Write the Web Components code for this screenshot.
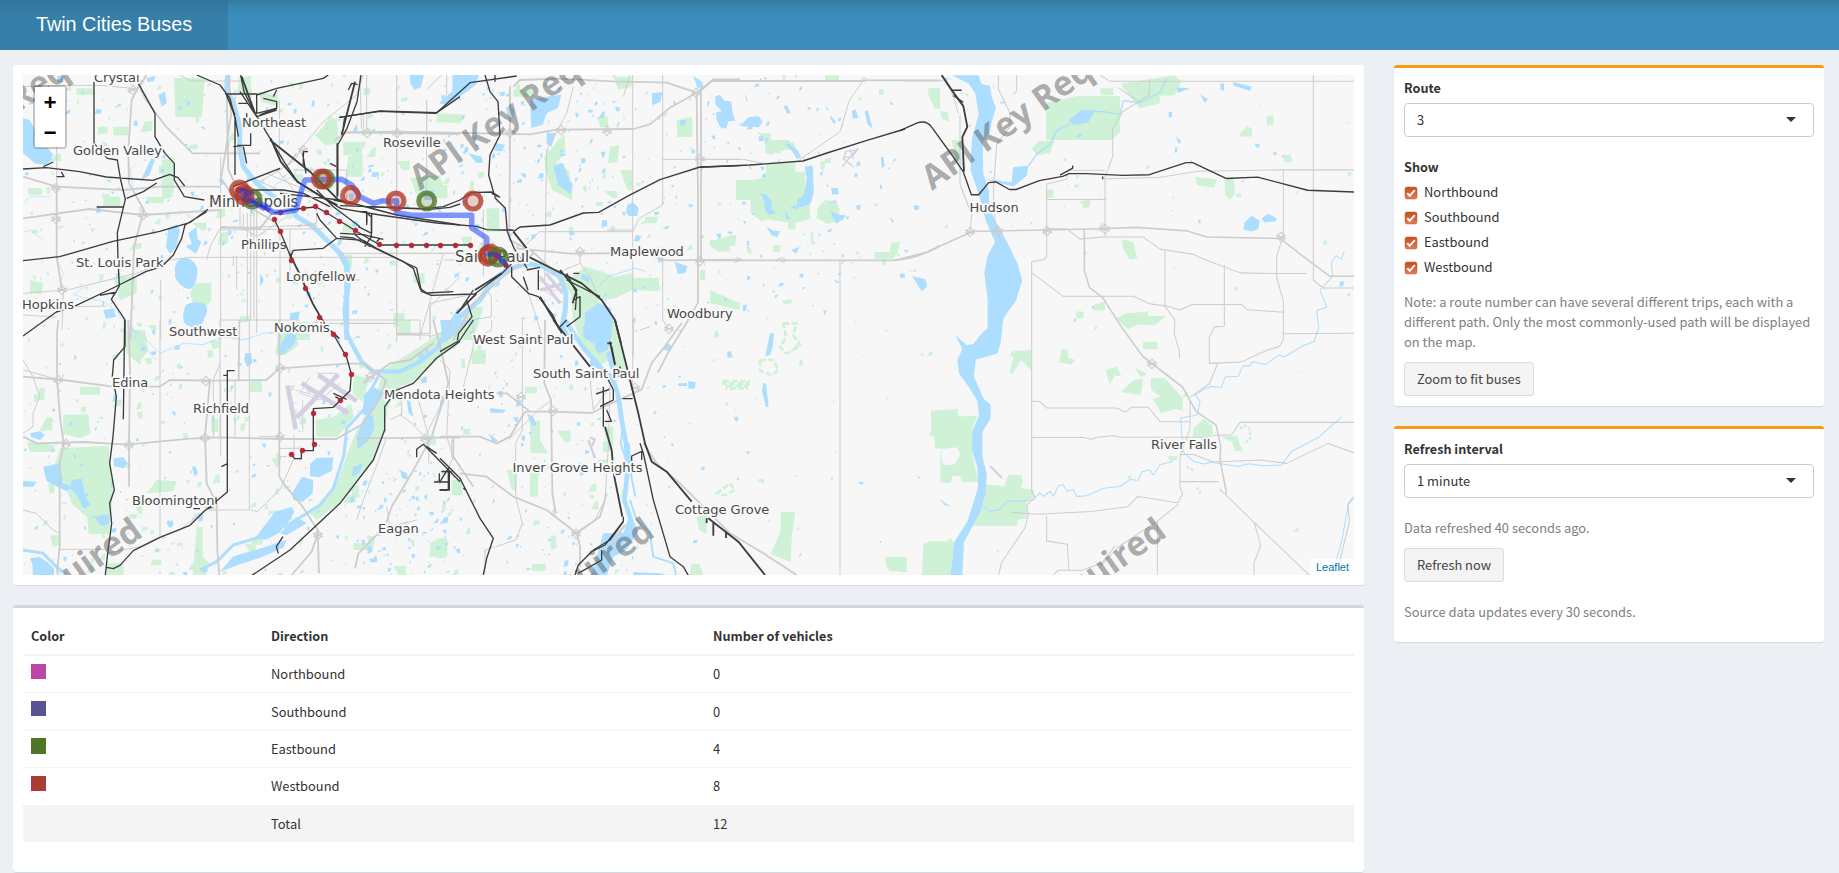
<!DOCTYPE html>
<html lang="en">
<head>
<meta charset="utf-8">
<title>Twin Cities Buses</title>
<style>
html,body{margin:0;height:100%;overflow:hidden}
body{background:#ecf0f5;color:#333;font:12.9px/20px "Noto Sans CJK SC","Noto Sans",sans-serif}
</style>
</head>
<body>
<bus-app></bus-app>
<script>
const define = (name, html, init) => {
  const t = document.createElement('template');
  t.innerHTML = html;
  customElements.define(name, class extends HTMLElement {
    constructor() {
      super();
      this.attachShadow({mode: 'open'}).append(t.content.cloneNode(true));
    }
    connectedCallback() { if (init) init(this, this.shadowRoot); }
  });
};

define('app-header', `
<style>
:host{display:flex;height:50px;background:linear-gradient(rgba(0,0,0,.14),rgba(0,0,0,.04) 8px,transparent 18px),#3c8dbc}
.logo{width:228px;background:linear-gradient(rgba(0,0,0,.08),transparent 16px),#367fa9;color:#fff;font:19.8px/48px "Liberation Sans",Arial,sans-serif;text-align:center;height:50px}
</style>
<div class="logo"><slot></slot></div>`);

define('app-box', `
<style>
:host{display:block;background:#fff;border-radius:3px;box-shadow:0 1px 1px rgba(0,0,0,.1);padding:10px;box-sizing:border-box}
:host([kind]){border-top:3px solid #d2d6de}
:host([kind=warning]){border-top-color:#f39c12}
</style><slot></slot>`);

define('form-select', `
<style>
:host{display:block;margin-bottom:20px}
b{display:block;margin-bottom:5px;font-size:12.65px}
.field{display:flex;align-items:center;justify-content:space-between;height:34px;box-sizing:border-box;border:1px solid #ccc;border-radius:4px;padding:0 17px 0 12px}
i{border:5px solid transparent;border-top-color:#333;border-bottom:0;margin-bottom:2px}
</style><b></b><div class="field"><slot></slot><i></i></div>`,
(el, r) => { r.querySelector('b').textContent = el.getAttribute('label'); });

define('check-option', `
<style>
:host{display:flex;align-items:center;height:20px;margin-bottom:5px;gap:7px}
svg{width:12px;height:12px;margin-left:1px;margin-top:1px;overflow:visible}
</style>
<svg viewBox="0 0 12 12"><defs><linearGradient id="g" x2="0" y2="1"><stop stop-color="#c64d1e"/><stop offset="1" stop-color="#e27d55"/></linearGradient></defs><rect x="0" y="0" width="12" height="12" rx="2" fill="url(#g)" stroke="#b85c38" stroke-opacity=".5"/><path d="M2.3 6.2 4.7 8.8 9.8 3.2" fill="none" stroke="#fff" stroke-width="1.9"/></svg>
<slot></slot>`);

define('muted-text', `<style>:host{display:block;color:#808080;margin-bottom:10px}</style><slot></slot>`);

define('push-button', `
<style>
:host{display:block}
button{font:inherit;color:#444;background:#f4f4f4;border:1px solid #ddd;border-radius:3px;height:34px;padding:0 12px;display:block;white-space:nowrap}
</style><button><slot></slot></button>`);

define('vehicle-table', `
<style>
:host{display:block}
.row{display:grid;grid-template-columns:240px 442px 1fr;padding:0 8px;box-sizing:border-box;height:37.4px;line-height:20px;align-items:center;border-top:1px solid #f4f4f4}
.head{height:38px;border-top:0;border-bottom:2px solid #f4f4f4;font-weight:bold;font-size:12.65px}
.head + .row{border-top:0;height:36.4px}
.total{background:#f4f4f4}
i{display:block;width:15.4px;height:15.4px;align-self:start;margin-top:7.7px}
</style>
<div class="row head"><span>Color</span><span>Direction</span><span>Number of vehicles</span></div>
<div class="row"><i style="background:#bb46a8"></i><span>Northbound</span><span>0</span></div>
<div class="row"><i style="background:#5a5391"></i><span>Southbound</span><span>0</span></div>
<div class="row"><i style="background:#507525"></i><span>Eastbound</span><span>4</span></div>
<div class="row"><i style="background:#a93d34"></i><span>Westbound</span><span>8</span></div>
<div class="row total"><span></span><span>Total</span><span>12</span></div>`);

define('zoom-control', `
<style>
:host{display:block;position:absolute;left:10px;top:10px;border:2px solid rgba(0,0,0,.2);background-clip:padding-box;border-radius:4px}
div{width:30px;height:30px;background:#fff;color:#000;font:bold 22px/36px "Liberation Mono",monospace;text-align:center;overflow:hidden}
div:first-child{border-bottom:1px solid #ccc;border-radius:2px 2px 0 0}
div:last-child{border-radius:0 0 2px 2px}
</style><div>+</div><div>−</div>`);

/* The city map is drafted on six sheets, each at three units to the pixel. */
define('bus-map', `
<style>
:host{display:block;position:relative;height:500px;overflow:hidden;background:#f7f7f7}
svg{display:block;width:1331px;height:500px}
.w{fill:#addeff}.p{fill:#cff1d6}
.wl{fill:none;stroke:#addeff;stroke-linejoin:round;stroke-width:4}
.r{fill:none;stroke:#cdcdcd;stroke-width:3;stroke-linejoin:round}
.R{fill:none;stroke:#cdcdcd;stroke-width:5.4;stroke-linejoin:round}
.k{fill:none;stroke:#3c3c3c;stroke-width:4;stroke-linejoin:round}
.K{fill:none;stroke:#3c3c3c;stroke-width:5.5;stroke-linejoin:round}
.a{fill:none;stroke:#d4d0e2}
.mark text{font:bold 34px "Open Sans",sans-serif;fill:#4c4c4c;fill-opacity:.46}
.names text{font:13px "DejaVu Sans",sans-serif;fill:#484848;stroke:#f9f9f9;stroke-width:3.4px;stroke-linejoin:round;paint-order:stroke}
.names .big{font-size:15px}
.leaf{position:absolute;right:0;bottom:0;background:rgba(255,255,255,.7);color:#0078a8;font:11px/16px "Liberation Sans",Arial,sans-serif;padding:0 5px}
</style>
<svg viewBox="23 75 1331 500">
<g id="parks"></g>
<g class="p">
 <g transform="scale(.33333)">
  <path d="M522 234h92l-8 118-80-2zM485 480l38-10v90l-6 30-30 10zM590 850h44v50l-10 16h-44l-10-40zM775 275l60 10v36l-50-16zM990 350l22 10 4 70-40 6-32-30 20-20zM1045 470l42-10v70h-50zM340 830h70v50l-50 20zM340 380h46v26h-46zM880 965h50v55h-80zM310 590h50v30h-50zM85 565h40v20H85zM90 840l40 10-5 34-35-10zM230 265h54v20h-54zM440 590h50v20h-50zM1230 535l90-10 10 40-80 14zM1240 820h34v30h-34zM1180 940h34v40h-34z"/>
 </g>
 <g transform="translate(0 320) scale(.33333)">
  <path d="M1150 150 1290 60 1380 0v70l-70 50-80 70-60 20-14 110-36 100-90 120-80 60-20-20 80-90 40-110 20-50 50-80zM180 385l145-8 15 130-12 135h-62l-4-50-46-40-26-70-28-40zM190 285l75-3 6 60-30 12-52-12zM946 300l56-10 50-40 10 40-50 60h-62zM375 30h60l10 60-30 40-36-30zM470 480l60 4-10 30-80 6zM590 620h18v90l20 20-10 34h-40zM1062 165l46 10-20 70-30-24zM836 30l50 5 10 40-40 30h-30zM320 730h50v35h-50zM750 180h36v36h-36zM240 200h60v24h-60zM1310 655h26v60h-26zM1292 666l50-8v52h-54zM1060 670h60v20h-60zM80 365l80 10 10 20-80 0z"/>
 </g>
 <g transform="translate(340 60) scale(.33333)">
  <path d="M230 375h92v40h-92zM613 290l60-70 4 60-30 30 40 20 10 90-60-30-22-60zM735 620l50 14 40 16 50-10 6 14h76v40l-80-4-50 24-40 6-60-10-30-60zM1010 180l46-10 2 60-46 2zM840 330h36v60h-14zM290 160l90 4-20 26-70-4zM440 445h38v70h-38zM640 635l60 20 70 60 50 60 20 66H720l-20-60-8-80zM180 780h32v44h-38zM380 740h50l-30 100h-60zM810 260l28-4-6 50-28 4zM1110 690l90 40v20l-90-20zM820 50h56v30l-40 10zM10 245h70l-20 40H10zM520 90h60v20h-60zM915 470h40l-6 20h-34zM1080 630h16v30h-16z"/>
 </g>
 <g transform="translate(440 320) scale(.33333)">
  <path d="M420 0h105l35 160-30 10-20-50-40 20-50-70zM95 90h42v42H95zM270 310l30-10v60l25 40h-54zM270 460h24v70h-24zM1022 576h44l-10 70-4 80-60-24 30-70zM1335 710h45v44h-30l-12-16zM770 590l30-5v56l-22-10zM755 732h24l10 33h-40zM490 320h30v60l-20-10zM275 732h42v20h-40zM35 480h32v45H35zM255 200h36v20h-36zM200 450h30v60h-14zM950 480l20-6 4 18z"/>
  <path d="M960 120h40l15 30-20 16-35-14zM1030 10h40l-10 35 20 30-40 26-20-20 18-30zM850 183h76v8h-76zM860 198h60v7h-60zM830 520l40-30 14 20-30 16z" fill="none" stroke="#cff1d6" stroke-width="8" stroke-dasharray="18 7"/>
 </g>
 <g transform="translate(700 70) scale(.33333)">
  <path d="M178 190h34v20h50l20 10 18 44-30-26-28 4v8h-22l-4 4-20-6v-18h2zM108 330h46l44-8v-36l10-6h78v26h30l-2 60 16 24v56l-30 10h-14v22h-22v-20l-60-10-20 6-32-24v-40h-44zM352 415l22-24 36 2 8 26v36l-36 6-32-16zM30 510h14l50-14h14l-2 30-16 4v14l-34 2-26-18zM523 546h46l4-28 28-2-8 30-14 20h-56zM375 15h42v15h-42zM684 54h36v64l-14-4-20-36zM362 273h12v26h-12zM219 525h22v20h-22zM332 485l8 2v28l14 6-20 2zM537 56h13v18h-13zM248 15h8v14h-8z"/>
 </g>
 <g transform="translate(900 60) scale(.33333 .34447)">
  <path d="M438 125l90-20h132v105l-25 22H438zM395 258l20-22 50-2-15 36-38 8zM602 82h38v20h-38zM664 68l160-24 20 20-20 38-45 2v22l-60 14-50-60zM85 82l34 2v34l-14 26-16-34zM120 146l26 8v26l-20-10zM154 232h22l14 80-20-14zM885 340l66 6-10 24-50-6zM974 350l28-10 2 50-14 16-14-12zM1022 212l20-20 14 8v22h-36zM1150 276h22l6 20h-26zM540 410l30-4v20l-18 6zM440 376h20v24h-20zM666 520l34 10 12 46-24 4-20-34zM93 1018l80-5v22l58-2-16 50v52l20 90-50 0-4-16-24-2-4 20h-32V1128h-16l-3-36h-14l6-24zM260 1232l140 15 4 20-24 14v50l-28 4v17H220l32-70zM324 1204h40l4 20-8 26h-50zM70 1405l20-8h72l-10 98H66zM0 1442h20v44H0zM730 818l40 0 4 22h-46zM580 712l35-12v26l-34 2zM528 730h22v20h-22zM752 924l44 0 52 58v36l-20-5-44 12-26-40 22-8-26-20zM880 1070l30-28 28 20v32h-60zM960 1094l50-4 18 46h-22l-10-26zM650 750l26-14 70-6-4 12 56 2-34 26-50-2-30 14zM345 845l48-4v60l-30-30-25 40-10-4zM485 840h18l2 26 20 4-10 14-38-6zM616 900l34-10 14 28-20-2-14 26zM704 892l38 20-20 8zM805 1150h26v12h-24zM700 930l30-4-8 46-60-8z"/>
  <path d="M1020 1070q24-20 30 10t-20 30M860 1180l20 10M890 1240l14 20" fill="none" stroke="#cff1d6" stroke-width="8" stroke-dasharray="9 5"/>
  <path d="M120 1130l50-6 12 20-18 30-34 2z" fill="#f7f7f7"/>
 </g>
</g>
<g id="ponds"></g>
<g class="w">
 <g transform="scale(.33333)">
  <path d="M69 355l20 5 14 25v58l40 0 16 20-6 20-18 12-30-5-36-30zM525 800q5-25 35-27 35 12 32 47-2 40-22 48-35-8-45-38zM557 915q23-15 58-3 15 18-5 48-20 25-50 15-20-15-3-60zM505 685l25-12 10 17-10 50-20 22-12-22zM565 700l25-20 2 36 12 10-16 36-32-24 20-6zM475 285l20-10 5 35-15 10zM430 525l24-50 12 2-18 48-28 20zM1228 225h40l-8 35-15 10zM870 940l30-6-5 26-25 0zM310 930l30-4 8 24-30 6zM780 820l12 20-12 20zM100 400l40-2 10 30-30 10zM440 235l26-8-4 16-20 4zM560 870l20-6"/>
  <path class="wl" style="stroke-width:15" d="M683 225l-3 45 20 40 20 70-2 60 12 60 40 50 50 40 50 30 20 30 50 30 40 40 40 40 22 30 3 60-10 80 5 70"/>
  <path class="wl" style="stroke-width:2" d="M240 850l10 14-30 20 40 10 50 10 40 30 20 30 60 60M170 780l20 40-10 30M370 600l30-40-10-50 20-20M150 590l-60 0-20 20M900 490l-20 40-50 20-20 30M60 700l30-10 40 30"/>
 </g>
 <g transform="translate(0 320) scale(.33333)">
  <path d="M835 85l30-50 24 10-4 24-34 34-16 4zM735 100l18 0 4 30-16 10-8-20zM550 0h62l-10 18-30 4zM930 432l20-18 50-2-4 40-40 20-26-4zM876 520l30-50 34 10-2 40-30 26-28-6zM765 655l60-80 50-14 8 14-20 34-26 30-40 20zM660 755l40-46 70-20 90-30-10 24-70 30-60 20zM1092 225l24-26 36 20-24 40-20 30-20-6zM1070 350l24-60 24-6 6 40-20 40-30 24zM1060 440l30-10-14 30-20 10zM130 440l50-10 10 60 30 10-20 14-60-30zM215 480l30-4 10 50 16 30-20 10-20-40-20-20zM340 415l30-4 14 20-12 14-30-6zM90 715l30-4 20 14 22 20 0 20H98l0-30zM283 590l44-8v30l-24 6zM90 340l30-6 14 12-14 14-26-8zM70 482l40 4-10 14-34 0zM576 440l10-2 8 20-10 12zM1220 240l10 0 10 50-14-10zM1200 450l20 10 6 20-20-6zM890 590l30 20-60 36-20-6zM1014 395l20 20"/>
  <path class="wl" style="stroke-width:13" d="M1040 0v40l20 40 25 45 35 30 80 0 60-30 50-40 40-70 30-50"/>
  <path class="wl" style="stroke-width:9" d="M1140 160l-30 55-15 50-55 60-8 80-32 100-40 50-80 50-80 40-100 30-50 50-50 25M69 690l60 10 40 40 30 25"/>
  <path class="wl" style="stroke-width:2.5" d="M380 20l40 20 40 40 20 20 70-30 60 4 60-24 60 10 60-20 50-4M390 0l20 60 60 60"/>
 </g>
 <g transform="translate(340 60) scale(.33333)">
  <path d="M337 45h80l-10 30-40 30-50 30-20-6 40-36zM210 45h36l-6 30-16 14-14-20zM570 120l50-10 44-6-10 40-34 16-12 34-34 10zM620 218l28 2-14 40-14-8zM640 318l30-8 16 50 12 10-4 34-40-30zM935 100l32-4-6 30-24 10zM1060 48l30 20-16 20zM470 250l26 4-10 20-24-2zM385 280l40 10 4 18-20 0zM1003 605l40 14-8 20-20 4zM862 435l16-8 18 16-4 24-26 2-8-14zM888 525l16 4-8 16-14-2zM734 760l40-30 40 14-10 96h-68zM725 640l26 14-6 14-20-12zM248 390h34v30h-28zM1020 180l18 0-2 16-16 2zM498 140l26 6-6 30-16-8z"/>
  <path class="wl" style="stroke-width:15" d="M0 580l20 40v220M310 830l50-60 60-50 40-60 40-30 60-20 50 10 50 30 18 50-2 50-10 50 30 50"/>
  <path class="wl" style="stroke-width:2.5" d="M775 680l30-30 80-26 30 10"/>
 </g>
 <g transform="translate(440 320) scale(.33333)">
  <path d="M430 20l40-40 50 14-6 54-10 40-30 14-10-30-34-20zM680 66l14 12-4 16-20-6zM862 96l10-4 6 20-16 2zM745 184l22 2-2 20-20 0zM715 190l26 0v8h-26zM990 40h12l-4 40-8 26-14 2zM970 190l8 0 8 70-8 2-12-50zM150 265l46 4-4 9h-40zM260 280l20 10 10 26-14 2zM145 340l30 22-16 6zM917 394h12l-4 10zM490 640l60 0 20-60 20 60-30 50-40 20-20 56h-46zM0 0h20l0 0 70 0-40 40-40 30zM0 220l14 20-14 40zM450 120l36 20-10 6-26-8zM580 756l80 4 20 5H580zM245 345l10 4v14l-10-2zM498 100l14-10 10 50-10 10z"/>
  <path class="wl" style="stroke-width:14" d="M375 0l25 40 35 50 45 50 35 30 18 50 10 70 15 80 5 70-5 60-5 40 20 60 15 40"/>
  <path class="wl" style="stroke-width:6" d="M540 230l10 80-8 60 20 60M570 540l20 60 40 40 10 70 60 20 8 35M566 370l8 100 12 60"/>
 </g>
 <g transform="translate(700 70) scale(.33333)">
  <path d="M45 80l14-6 14 18 20 2 4 30 8 28-20 2-6 22-18-4-12-24 0-22 16-2-18-20zM120 168l26-26 30-4 12 18-12 16zM250 108l12-2 10 22-10 4zM455 124l12-6 8 26-16 2zM494 124l10-2 14 54-16-14zM252 220l16 2 26 20 10 20-14 4-12-20zM314 290l24-4 4 80-10 34-24 12-18-2 2-20 20-16 8-50zM178 370l22 4 16 20-2 20 14 16-24 4-10-20-2-24zM394 354h20l2 18-20 2zM392 424l24 10 22 2-10 14-18 4-10-6zM200 470l20 12 20 2-8 18-20-10zM542 262h8l4 26-8 6zM0 40l10 6-2 12H0zM464 310l10 2-4 10-8-2zM644 404l14 4-4 12-12-4zM134 70l8 16-2 10zM376 106l12 14-6 0zM392 136l16 20-6 6-10-14zM80 484l20 2-10 8zM274 540l24-10-10 22zM568 440l14 12-6 6zM610 538l18 4-10 6zM540 344h6v14l-6-2zM358 310l12-6-4 16zM568 94l16 10-12 0zM254 424l16 20-10 6zM180 290l14 2-6 10zM380 482l18-8-8 14z"/>
 </g>
 <g transform="translate(900 60) scale(.33333 .34447)">
  <path d="M155 44h80l10 26 25 5 5 30 13 35-13 40-5 30-22 30 2 90 17 50v40l15 40 40 70 30 60 15 50-20 60-37 50-8 70-10 32-65 18-5 50 30 65 20 15v40l-25 40v70l13 50-3 60-15 50-50 90-5 95h-35l10-95 40-60 20-60 12-40-2-60-18-50 3-50 20-50-5-40-25-40-30-40-5-40 15-30-20-40 34 28 20-4 20-26 22-20v-80l-10-80 10-50 22-40-27-60-22-80-25-70 5-90 20-70-10-60-20-30zM255 345l80 10 4-44 46-4-4 28-40 32-60-14zM505 175l40-30 40 0-20 36-44 8zM1035 470l20-18 24 14-4 24-20 8-26-6zM1085 460l18-14 28 14-4 8-34 4zM1000 64l56 14-6 12-50-16zM900 100l24 14-10 10zM830 80l40 2-36 14zM36 628l40 8 6 20-16 16zM828 222l16 14-8 8zM806 150h10v16h-10zM116 1272l20 14 18 10-20-4zM40 424l20 8-14 4zM0 620h14v12H0zM50 1206l12 6-6 4zM960 68h12v22l-10-4zM1120 268h10v8h-10z"/>
  <path class="wl" style="stroke-width:4" d="M385 308l25-35 40-28 20-40 40-20M570 150l40 0 50 8 10-40 50 6 60-30 20-40"/>
  <path class="wl" style="stroke-width:3" d="M230 1285l40 25 30-5 20-25 60 0 20-5 20-18 10 10 20-15 10 15 15-30 15-5 10 20 20-5 10 20 30-2 50-22 50-5 30-20 25 2 10-25 25-5 10 15 20-30 40-10M840 1130l40 35 30 8 25-5 80 12 30-8 40 6 60-2 30-40 80-40 70-60M850 1140l-8-100 50-10 8-40-15-18 35-20 15-4 30 2 10-30 40-2 14-30 20 0 8-12 40 8 40-28 15 6 60-34 30-10 14-40-6-50 30-10-20-50 38-40-4-40 14-20 15 10 10-22M1360 1268l-15 20-20 110-30 95"/>
 </g>
</g>
<g class="r">
 <g transform="scale(.33333)">
  <path class="R" d="M425 240l-30 60-10 150 2 100 45 80-30 110-5 130-6 150M687 225l6 120-15 100-15 90 40 60 120 70M69 530l100 30 200 10 110-10 180 0M69 655l200-28 160 18 230-15M170 560l0 210 16 100M680 280l5 230 20 40 120 90M1005 420l30-22 65 0 280 4M890 460l-30 40M440 225l-22 35 20 40 60 80 80 80 200 0M820 635l-40 50-120-4"/>
  <path d="M69 260l110-4 120 0 110 10M170 260v400M200 870l210-50 100-40 60-8 620 0M69 930l160-10 90-2M69 945l100 6M190 870l-4 120M662 470v550M705 270l0 160M770 600v400M838 300v180M870 690v150M482 840v180M1190 270v730M620 780l10-40 30-55 290-10M742 640v320M752 630v330M762 625v330M730 640v50M720 620v60l50 30 90-60M660 960l240 0M950 960v40M960 970l230 0M1090 225l-20 60-100 80-50 60-40 60-100 60M1280 300l0 110M1100 225l0 175M540 225l30 18 160 0M660 690l310-4M710 768v100M700 768v30M69 880l130-10M750 560l90 60M730 570l90 60M770 540l130 60M800 520l140 60M830 510l60 70M1190 420v360M1190 780v20M840 700v90l0 230M810 1000l150-35M890 680l60-10 0-60M1190 1002l100 4M1290 1000v-80l30-30 60-60M1140 760h240M880 510h160l0 100M1340 225v60M1280 270l60-60"/>
 </g>
 <g transform="translate(0 320) scale(.33333)">
  <path class="R" d="M69 170l120 10 150 20 140 0 30-20 130 2 160-2 40-35 200-14 50 0 70 50-30 70-40 60-80 46H840L660 352l-90 4-190 18-130-8-140 4-40-20M385 0l5 150-3 220 0 130M175 0l-4 40 0 140 10 120 10 70-12 60 0 250-8 80M630 180l-15 170 5 140 30 60 2 140 6 75M718 0l-2 180M838 0v470l20 30 50 60 45 70 4 130M1070 355l210-2 100 0M1300 0l30 120 15 70-50 160-60 110-60 100-20 60-80 80-10 45M955 635l-20 60-60 70M1090 190l80-60 60-10 70-50"/>
  <path d="M660 0v130l-20 50v170M705 180v170M748 0v570h-120M480 0v650l-60 30-100 20M480 650l60-20 50-40M660 130v220M752 570l20 5 70-70 40-90 0-70M840 385h60M69 120l30 50 20 60-20 50 0 40-30 20M69 570l40 10 50 50 20 10M180 688h140M70 150l110 30M662 180l0 230M780 350h60M840 410h20M1170 300l30-15 30 20 50 50M1205 220v66M1250 220l36 130v80M1350 0v30l-60 20M1070 600l20-60 50-130 20-60M1160 560l10 60 80-20M1355 360v50l25 25M1280 340l30-60 30-60M960 0h230v40h100"/>
 </g>
 <g transform="translate(340 60) scale(.33333)">
  <path class="R" d="M0 217l170-2 400 8 80-14 230-2 50-14 60-50 80-45 50-40h80M510 220l-2 320M520 80l20-20 120-4 160 8 160 4 90 30 2 190 2 100 0 300 0 40-40 70-50 80-30 60M340 840l60-110 90-80 90-70M530 565l160 16 210-2 80 22 220-2M508 540l70 35 70 65M510 80v140"/>
  <path d="M170 45v800M260 120v300M250 45l-10 40M60 45l4 160M70 220v-60M510 80l-2 200M700 80l-20 80-60 110-6 400M850 110l20-65M878 45v470h-280l-40 40M878 515l20-40 70-40V45M968 298h232M0 580h500M800 510h78v500M170 825h70M0 790h140M720 580v30l-70 30M720 610l30 40 20 50M430 450v200M550 650l60 190M270 840v-110l140-30M440 690l14 20v60l-60 10M968 600v180l20 30M0 660h60M310 600h100M170 780h70v60M310 580l-70 250M400 770l-80 70"/>
 </g>
 <g transform="translate(440 320) scale(.33333)">
  <path class="R" d="M315 0l-2 190 20 50 4 280 10 60M40 350l80 0 50 20 40-20 45-75 80 0 120 4 60-30 90-40 30-80 40-50 50-70M60 460l80 10 80 60 100 40 90 70 10 40v60M170 220h30l70 55M0 350h40l0 60 60 90M610 370l40 60 70 60 90 90 60 60 100 60 100 65M410 640l70-50 20-70"/>
  <path d="M247 0v330l-20 40v160l20 80-20 50-60 20M580 0v110M1200 0v765M0 120l30 30-10 200 20 60-20 50M100 0v80l-30 120M155 0v30l-60 30M600 30l30-10M460 270l50-70-5 180-10 160-30 60-60 40M165 680l-30 10v70M450 180l10 90M330 580l80 60M335 240l-40 30-90 90"/>
 </g>
 <g transform="translate(700 70) scale(.33333)">
  <path class="R" d="M0 64l35-31h445l12-2 228 0M0 571h110l310 0h160q70-4 140-43M3 60v510"/>
  <path d="M0 268h130l70 14M490 31l-42 60-28 94-28 20-92 63M420 571v180M110 562l16 8-24 8M235 566l12-3 12 8-12 6zM484 28l8-6 10 8-10 5z"/>
 </g>
 <g transform="translate(900 60) scale(.33333 .34447)">
  <path class="R" d="M0 578l80-20 90-40 50-20 180-4 200-4 110-4 150 10 60 18 220 4 80 60 70 50H1362M553 490l0 120 15 50 40 30 60 90 60 80 120 90 40 70 60 40 14 60-2 40 20 100" style="stroke-width:4.6"/>
  <path d="M958 1244l104 98 165 153M0 60h130M180 160l0 200 35 90-5 50M125 44l30 50 20 60M295 44l0 40 35 70 0 40-40 50-10 140 5 90 20 60M340 100l10-10V44M600 44l30 18H1362M1240 44V640l30 22h92M615 510V340l23-60V200l30-50 50-30 30-20V62M655 80l60 40M615 345l160-4 120-18 250-4h217M438 405h180M440 570V360l60-14 5-26h110M440 490v80l-10 10-35 6v665l10 20-25 22 5 25-10 40-70 100-10 40-30 35M395 618l95 68h210l50 22 50 6 40 12 35-16h150l15 15 110 7M795 550v165l30 40-2 40 15 50v20M973 595v178l-30 2-15 30v75h25l70-3 80-35 35-10 12-20V700l-20-70v-60l20-60V320M440 490l60 0 40 30 70-6 120 0 50 35 100 15 30 14 110 40 120 2h80M1150 795l212-2M868 980l60-40 25-58M395 990l25 2 20 18h210l25 12 20-14h50l35 42h90M395 1096h155l25 5 15-6 50-4 25 4h265M940 1090l55-2 25-36h342M870 990v80l-30 80v90l8 20-15 25-120-18-30 30-110 14-160 8-80-6M840 1145h40l60 22 140-6 80 10 125-58 78 28M840 1224h115M440 1324v72l62 10 5 75M835 1290l-65 50-110 70-60 60M772 1340v155M1062 1340l20 70-20 50v35M1362 1270l-18 20 4 50-30 120v35M460 1495l15-14h70l60-20 40-50"/>
 </g>
</g>
<g class="r" id="knots"></g>
<g class="a">
 <g transform="translate(0 320) scale(.33333)"><path stroke-width="14" d="M863 198l24 130M905 190l140 90M955 165l115 78M1015 163l-125 130"/><path stroke-width="3" d="M855 198h30M908 240v98M950 160h60M880 300l30-20M930 170l-30 50 60 20 60-50M886 210l70 20"/></g>
 <g transform="translate(340 60) scale(.33333)"><path stroke-width="9" d="M600 650l60 80M618 640l50 60M600 690l70-20"/><path stroke-width="3" d="M595 660l70 30-55 0 60 40"/></g>
 <g transform="translate(440 320) scale(.33333)"><path stroke-width="7" d="M445 360l20 54M450 352l14 6-8 20M555 615l-40 50"/></g>
 <g transform="translate(700 70) scale(.33333)"><path stroke-width="4" d="M426 290l48-56M428 264l34 28M438 244l-6 18 24-2 16-20zM450 238l10 30"/></g>
 <path stroke-width="2" d="M990 466l12 12"/>
</g>
<g class="k">
 <g transform="scale(.33333)">
  <path d="M282 245v185l40 45 30 5 10 60 14 58-24 100 2 80 4 80-24 40 40 60-4 300M415 250l50 90v70l30 50 28 30v50l30 50 60 10M69 507l70-4 100 12 80 16 140 10 50-18 25 10 20 25M69 782l110-12 160-46 140-30 90-26 55-40M490 795l30-30 25-50 10-40 65-40M380 595l50-20 40-26M290 621h80M69 1008l100-72 60-20 110-52 100-50 50-15M300 886l50-10M130 500l30-14M170 530h22l-8-14M590 225l70 30 30 40 15 60v170M675 282h95M722 225l10 50 30 60 30 50 60 100 40 60 130 80M700 560l140-55M720 275l50 75 60-20M770 280v60l60-15v-20l-40-10M820 290l10-20M770 285l60-20M830 265l140-30 15-10M1083 225l-12 80-30 80-28 50v150M1017 352l120-18 170 6 73-50M1045 270l10-20 18 4M1030 380l4-28M740 340v20M752 400v36h-40M730 440l10 50M700 440l30-4M705 350l10 60M910 495v-40h14M918 520l-10-60M990 490l20 10M950 570l50 50 80 60M720 570h130l60 10 80 40M840 580l180 20 170 45 190 30M1000 600l100 20 190 8 60-6 30-10M950 640l10 20 50 55 80 6 40 24 80 40 30 20 20 60 20 14 80-4M1010 715l-40 30-90 6-10 24M1100 640l14 10v60l-20 30M1100 645v30M1020 700l70 4 60 14M1060 700l50 40M715 310h26"/>
  <path class="K" d="M725 230l40 110M812 415l30 70 50 60 80 50 40 20M680 285l24 60M1012 430v160M810 420l120 95 90 90M868 760l30 60 40 90 40 70 40 36M780 345l50-20"/>
 </g>
 <g transform="translate(0 320) scale(.33333)">
  <path d="M375 0v80l-34 40-4 50 12 60-10 120-10 80 14 80-14 40 6 60-12 90-7 65M320 742l20 4 20-10 40-44 80-40 90-36 40-40 72-60V150M684 152h20M670 166h14M664 440l20-10M1000 42l40 70 14 50-4 50-50 50-60 4v126h-36v24h-20l-8-10M1000 220l40 18M1006 230l20 12M849 650l-20 30 6 20M750 770l120-80 150-140 100-130 34-90v-70l36-50 50-20 70-76 70-50M1380 485l-110-112-20 15v24M1310 400l-30-20M1302 486h44M1325 454h30M1318 510h30v-56M1318 460v24M580 566h20M624 566l14-6M648 532v20"/>
 </g>
 <g transform="translate(340 60) scale(.33333)">
  <path d="M0 172l120-19 170 5 100-90 140-20M435 45l15 50 24 30 6 100-30 60-4 60 20 70 30 30 6 70 20 50 40 60M0 437l250 9 60-6 50-20 34-22 62-2 24 16M0 445l120 20 170 24 120 10 30 10 80 2M520 515l20-14 90-6 100-36 46-2 90-50 94-48 120-38 120-4M0 530l40 4 190 90 14 70 30 12 130-4 80-60 30-30M560 630l40-8M595 630v60M515 620v30l50 50 30 10 40 50 30 60M550 650l14 40M380 720l16 50-40 50-4 20M360 750l40-60M700 720l20-10v60l-40 30M680 640l30 60-4 50M680 660l100 50M700 640h18M120 535l-10 10M455 400l20 10M470 510l50 0M60 455h20v34M95 460v60l-40-20M465 45v20"/>
  <path class="K" d="M520 515l40 50M565 590l80 40 80 40 60 50 40 60 18 70M660 630l50 60-12 40M350 760l60-60M485 640l-80 50M600 710l60 100M45 65l-40 160"/>
 </g>
 <g transform="translate(440 320) scale(.33333)">
  <path d="M0 95l60-35 40-60M490 200v120M468 222l40-14M480 260l40-20 0-30-20-40M482 258l22-10M500 270l14 34h-20M548 236h30M575 422v-14l30-14v26M0 415l60 60 60 120 40 60-20 60-10 50M0 485l25-40v64H0M4 455h20M0 510h20M600 370l10 30 30 140 50 170 40 30 20 35M405 765l10-30 40-40 40-20 54-70M485 690v30l-70 40M515 80l10 50M360 20l20-20M70 505l10 6"/>
  <path class="K" d="M340 0l110 140M525 0l70 280 20 90 20 55 45 30 75 90M495 320l20 70 6 70 26 130M510 65l15 70M820 605v42M800 595v14M858 636v18M805 595l90 70 80 100M502 70h14M540 140l-4 30"/>
  <path d="M550 590v15l-40 55-50 30"/>
 </g>
 <path d="M700 167.3l50-2.3 53-4 24-8 40-12.6 38-11.4" stroke-width="1.4"/>
 <g transform="translate(900 60) scale(.33333 .34447)"><path d="M0 205l50-22q30-10 45 12l60 80 35 50 24 66h22l30-35 22-2 40 22h20l70-26 70-12 20-8h50l110 5 80-2 110-35h20l100 46 95-4 150 38 160 6 32-4M480 334l38-20v-8M608 338v8M155 88h30M160 103l30 20"/><path class="K" d="M125 44l35 50 30 40 12 60-15 30 5 100"/></g>
</g>
<g class="mark">
 <text transform="translate(-92 191) rotate(-35.3)">API Key Required</text><text transform="translate(420 191) rotate(-35.3)">API Key Required</text><text transform="translate(932 191) rotate(-35.3)">API Key Required</text>
 <text transform="translate(-92 703) rotate(-35.3)">API Key Required</text><text transform="translate(420 703) rotate(-35.3)">API Key Required</text><text transform="translate(932 703) rotate(-35.3)">API Key Required</text>
</g>
<g class="names" id="names"></g>
<g id="stops" fill="#c8202f" stroke="#8d2833" stroke-width=".6"></g>
<path d="M240 190L250 199 266 206 272 212 280 212.500 296 210 300 195 305 180 341.700 179.300 351.700 185 360 196.700 373.300 203.300 381.700 201H396.700V212.700L411 215.300H471.700V228L486.700 238V253L494 254 506 265" fill="none" stroke="#1f45ff" stroke-opacity=".55" stroke-width="5.5" stroke-linejoin="round"/>
<path d="M239 189l9 0-4 9-6-4zM250 199l20 12" fill="none" stroke="#311bc0" stroke-opacity=".6" stroke-width="4"/>
<g id="buses" stroke-width="5" stroke-opacity=".78" fill-opacity=".22"></g>
<path d="M240 190l10 3-5 6 20 10M488 254l9 1 9 9" fill="none" stroke="#2b2bd0" stroke-opacity=".5" stroke-width="5"/>
</svg>
<zoom-control></zoom-control><div class="leaf">Leaflet</div>`,
(el, r) => {
  const $ = id => r.getElementById(id);
  const towns = [['Crystal',94,82],['Northeast',242,127],['Golden Valley',73,155],['Roseville',383,147],['Minneapolis',209,207,1],['Phillips',241,248.5],['St. Louis Park',76,267],['Longfellow',286,280.5],['Hopkins',22,309],['Southwest',169,336],['Nokomis',274,332],['Edina',112,386.5],['Richfield',193,413],['Bloomington',132,504.5],['Eagan',378,533],['Mendota Heights',384,399],['West Saint Paul',473,344],['South Saint Paul',533,377.5],['Inver Grove Heights',512.5,472],['Cottage Grove',675,513.5],['Saint Paul',455,262,1],['Maplewood',610,255.5],['Woodbury',667,317.5],['Hudson',969.5,211.5],['River Falls',1151,448.5]];
  $('names').innerHTML = towns.map(([n,x,y,b]) => `<text x="${x}" y="${y}"${b ? ' class="big"' : ''}>${n}</text>`).join('');
  const stops = [[274.5,219.5],[280.5,231.5],[291.5,260.5],[305.5,288.5],[319.5,317.5],[333.5,334.5],[345.5,354.5],[351.5,374.5],[340.5,400.5],[313.5,413.5],[314.5,444.5],[302.5,450.5],[291.5,454.5],[280.5,212.5],[303.5,208.5],[315.5,206.5],[326.5,212.5],[339.5,221.5],[355.5,230.5],[379.5,244.5],[396.5,245.5],[411.5,245.5],[426.5,245.5],[440.5,245.5],[455.5,245.5],[470.5,245.5],[506,265.5],[238,190]];
  $('stops').innerHTML = '<path fill="none" stroke="#3c3c3c" stroke-width="1.3" d="M274 219l6 12 12 29M274 213l30-5 12-1 11 6 29 18 24 14h92"/>' + stops.map(([x,y]) => `<circle cx="${x}" cy="${y}" r="2.4"/>`).join('');
  const G = '#507525', W = '#b33a2b';
  const buses = [[252,199,G],[239.5,190,W],[244,195,W],[324.5,179,G],[321.5,179,W],[350.5,195.5,W],[396,201,W],[426.7,201,G],[473,201,W],[488,256,W],[490,254,W],[498,257,G]];
  $('buses').innerHTML = buses.map(([x,y,c]) => `<circle cx="${x}" cy="${y}" r="8" fill="${c}" stroke="${c}"/>`).join('');
  const knots = [[133,90],[143,215],[56,188],[56,219],[62,290],[367,133],[397,133],[510,133],[561,130],[607,131],[696,93],[700,159],[700,261],[580,252],[58,380],[66,444],[129,445],[205,438],[280,437],[280,368],[206,381],[370,377],[318,535],[425,439],[553,411],[521,397],[635,388],[576,534],[669,329],[970,232],[998,231],[1047,231],[1105,229],[1281,237],[1152,364],[303,150]];
  $('knots').innerHTML = knots.map(([x,y]) => `<path stroke-width="1.1" d="M${x} ${y-5}l4 5-4 5-4-5zM${x-5} ${y-2}l10 4M${x-5} ${y+2}l10-4"/>`).join('');

  let seed = 77;
  const rnd = () => (seed = (seed * 16807) % 2147483647) / 2147483647;
  const scatter = (n, x0, x1, y0, y1, s) => {
    let d = '';
    for (let i = 0; i < n; i++) {
      const x = x0 + rnd() * (x1 - x0), y = y0 + rnd() * (y1 - y0);
      const k = s * (.35 + rnd() * rnd() * 1.6), q = () => (rnd() * k + k * .4).toFixed(1);
      d += `M${x.toFixed(1)} ${y.toFixed(1)}l${q()} ${-rnd().toFixed(1)} ${(rnd()*2-1).toFixed(1)} ${q()} -${q()} ${(rnd()*2).toFixed(1)}z`;
    }
    return d;
  };
  $('parks').innerHTML = `<path fill="#cff1d6" d="${scatter(190,23,300,75,575,7)}${scatter(160,300,640,75,575,6)}${scatter(45,640,860,75,420,4)}${scatter(28,860,1354,75,360,4)}${scatter(12,860,1354,360,570,3)}"/>`;
  $('ponds').innerHTML = `<path fill="#addeff" d="${scatter(260,23,300,75,575,3)}${scatter(400,300,640,75,575,3)}${scatter(150,640,860,75,330,2.6)}${scatter(36,640,900,330,560,2.6)}${scatter(38,880,1354,75,330,2.2)}${scatter(90,440,620,75,230,2.8)}${scatter(110,350,460,470,575,2.8)}"/>`;
});

define('bus-app', `
<style>
:host{display:block}
main{display:grid;grid-template-columns:1351px 430px;column-gap:30px;padding:15px 15px 0 13px}
section,aside{display:flex;flex-direction:column;gap:20px}
aside{align-self:start}
b{display:block;height:20px;margin-bottom:5px;font-size:12.65px}
.checks{margin-bottom:15px}
.note{height:60px;margin-right:-4px}
.table{height:267px}
.source{margin:20px 0 10px}
</style>
<app-header>Twin Cities Buses</app-header>
<main>
<section>
<app-box><bus-map></bus-map></app-box>
<app-box kind="plain" class="table"><vehicle-table></vehicle-table></app-box>
</section>
<aside>
<app-box kind="warning">
<form-select label="Route">3</form-select>
<b>Show</b>
<div class="checks"><check-option>Northbound</check-option><check-option>Southbound</check-option><check-option>Eastbound</check-option><check-option>Westbound</check-option></div>
<muted-text class="note">Note: a route number can have several different trips, each with a different path. Only the most commonly-used path will be displayed on the map.</muted-text>
<push-button>Zoom to fit buses</push-button>
</app-box>
<app-box kind="warning">
<form-select label="Refresh interval">1 minute</form-select>
<muted-text>Data refreshed 40 seconds ago.</muted-text>
<push-button>Refresh now</push-button>
<muted-text class="source">Source data updates every 30 seconds.</muted-text>
</app-box>
</aside>
</main>`);
</script>
</body>
</html>
